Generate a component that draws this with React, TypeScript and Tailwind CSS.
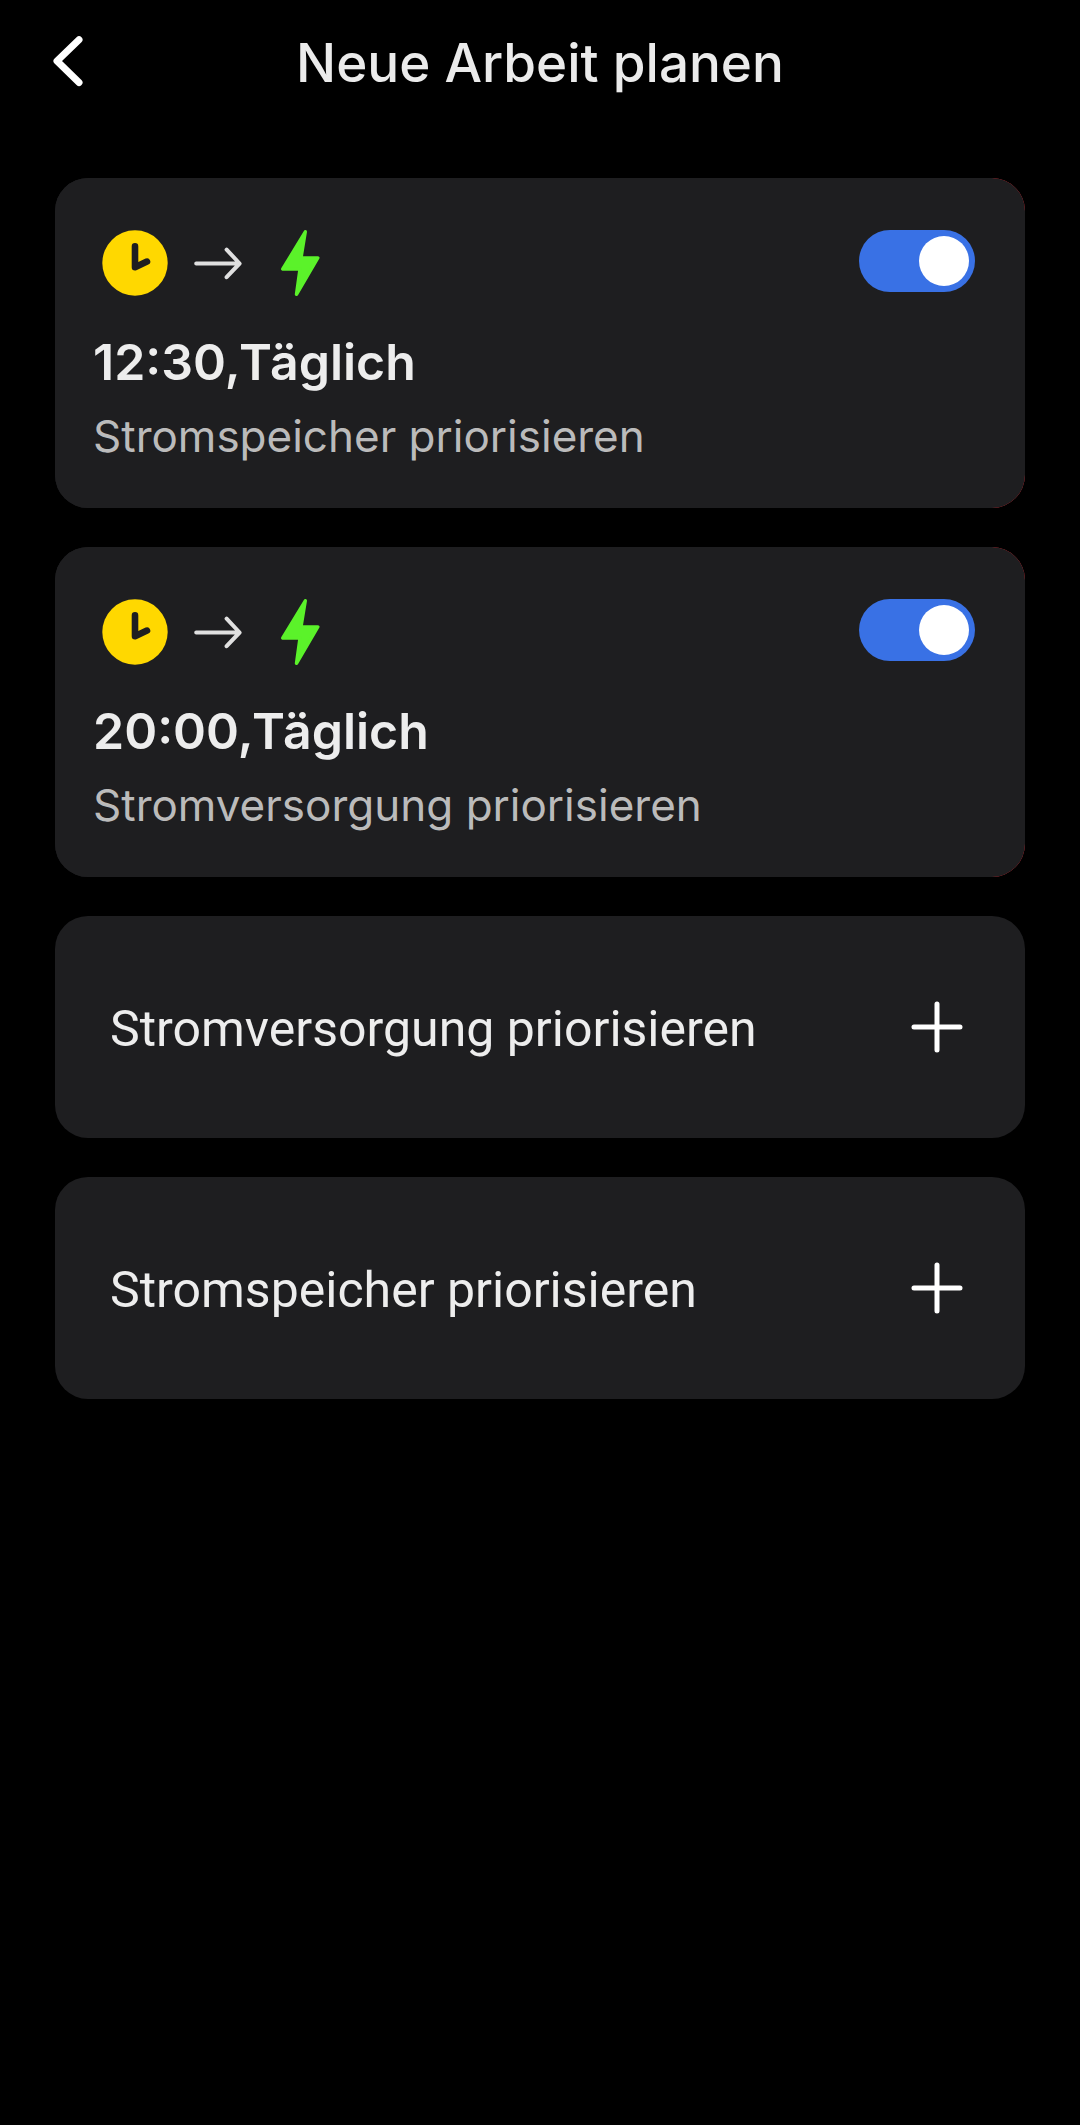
import { useState } from 'react'

interface Schedule {
  id: string
  time: string
  repeat: string
  action: string
  enabled: boolean
}

const initialSchedules: Schedule[] = [
  {
    id: 'storage',
    time: '12:30',
    repeat: 'Täglich',
    action: 'Stromspeicher priorisieren',
    enabled: true,
  },
  {
    id: 'supply',
    time: '20:00',
    repeat: 'Täglich',
    action: 'Stromversorgung priorisieren',
    enabled: true,
  },
]

const newTasks = ['Stromversorgung priorisieren', 'Stromspeicher priorisieren']

function BackIcon() {
  return (
    <svg width="32" height="54" viewBox="0 0 32 54" fill="none">
      <path
        d="M28 3.8 6 25l22 21.5"
        stroke="#fff"
        strokeWidth="7"
        strokeLinecap="round"
        strokeLinejoin="round"
      />
    </svg>
  )
}

function ClockIcon() {
  return (
    <svg width="66" height="66" viewBox="0 0 66 66" fill="none">
      <circle cx="33" cy="33" r="32.7" fill="#ffd800" />
      <path
        d="M33 16.4v20.8l12-5.6"
        stroke="#1e1e20"
        strokeWidth="6.6"
        strokeLinecap="round"
        strokeLinejoin="round"
      />
    </svg>
  )
}

function ArrowIcon() {
  return (
    <svg width="48" height="34" viewBox="0 0 48 34" fill="none">
      <path
        d="M2.2 17.5h43M32.6 3.6 45.6 17.5 32.6 31.2"
        stroke="#e0e0e0"
        strokeWidth="4"
        strokeLinecap="round"
        strokeLinejoin="round"
      />
    </svg>
  )
}

function BoltIcon() {
  return (
    <svg width="40" height="66" viewBox="0 0 40 66">
      <path
        d="M25.3 1.8 2.8 39H20L16.5 64.3 37.8 28H21Z"
        fill="#5bf22a"
        stroke="#5bf22a"
        strokeWidth="3.4"
        strokeLinejoin="round"
      />
    </svg>
  )
}

function PlusIcon() {
  return (
    <svg width="52" height="52" viewBox="0 0 52 52" fill="none">
      <path d="M26 3v46M3 26h46" stroke="#fff" strokeWidth="5" strokeLinecap="round" />
    </svg>
  )
}

interface ScheduleCardProps {
  schedule: Schedule
  onToggle: () => void
}

function ScheduleCard({ schedule, onToggle }: ScheduleCardProps) {
  const inputId = `schedule-${schedule.id}`

  return (
    <li className="rounded-[33px] bg-linear-to-r from-[#1e1e20] from-50% to-red-500 to-50%">
      <div className="rounded-[33px] bg-[#1e1e20] pt-13 pr-[50px] pb-[42px] pl-[38px]">
        <div className="flex items-start justify-between">
          <div className="flex items-center pl-[9px]">
            <ClockIcon />
            <span className="ml-[26px]">
              <ArrowIcon />
            </span>
            <span className="ml-[38px]">
              <BoltIcon />
            </span>
          </div>
          <input
            id={inputId}
            type="checkbox"
            role="switch"
            checked={schedule.enabled}
            onChange={onToggle}
            className="h-[62px] w-[116px] cursor-pointer appearance-none rounded-full bg-neutral-600 p-1.5 before:block before:size-[50px] before:rounded-full before:bg-white before:content-[''] checked:bg-[#3971e5] checked:before:ml-auto"
          />
        </div>
        <label htmlFor={inputId} className="mt-8 block">
          <span className="block text-[50px] leading-[68px] font-semibold text-[#ededed]">
            {schedule.time},{schedule.repeat}
          </span>
          <span className="mt-2.5 block text-[44px] leading-[60px] text-[#bbbbbb]">
            {schedule.action}
          </span>
        </label>
      </div>
    </li>
  )
}

export default function App() {
  const [schedules, setSchedules] = useState(initialSchedules)

  const toggle = (id: string) => {
    setSchedules((prev) => prev.map((s) => (s.id === id ? { ...s, enabled: !s.enabled } : s)))
  }

  return (
    <div className="min-h-screen bg-black font-['Inter',sans-serif]">
      {/* Header */}
      <header className="grid h-[126px] grid-cols-[1fr_auto_1fr] items-center px-[51px]">
        <button type="button" aria-label="Zurück" className="w-fit cursor-pointer">
          <BackIcon />
        </button>
        <h1 className="text-[53px] leading-[72px] font-medium text-[#ebebeb]">
          Neue Arbeit planen
        </h1>
      </header>

      <main className="px-[55px] pt-13">
        {/* Planned tasks */}
        <ul className="flex flex-col gap-[39px]">
          {schedules.map((schedule) => (
            <ScheduleCard
              key={schedule.id}
              schedule={schedule}
              onToggle={() => toggle(schedule.id)}
            />
          ))}
        </ul>

        {/* Add a new task */}
        <div className="mt-[39px] flex flex-col gap-[39px]">
          {newTasks.map((task) => (
            <button
              key={task}
              type="button"
              className="flex h-[222px] cursor-pointer items-center justify-between rounded-[33px] bg-[#1e1e20] pr-[62px] pl-[55px] text-left font-['Roboto',sans-serif] text-[50px] leading-[60px] text-[#ededed]"
            >
              <span className="pt-1">{task}</span>
              <PlusIcon />
            </button>
          ))}
        </div>
      </main>
    </div>
  )
}
